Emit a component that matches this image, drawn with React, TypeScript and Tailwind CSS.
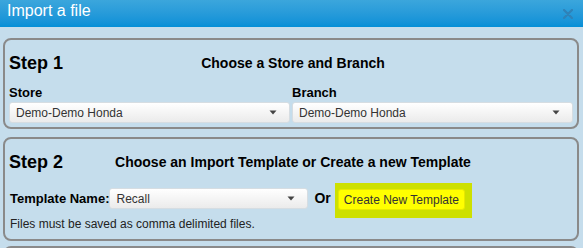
import React from "react";

const Caret = () => (
  <svg width="8" height="5" viewBox="0 0 8 5" className="shrink-0">
    <path d="M0.5 0.5 L7.5 0.5 L4 4.5 Z" fill="#444" />
  </svg>
);

const Select = ({ value, className = "" }: { value: string; className?: string }) => (
  <div
    className={`flex h-[21px] items-center justify-between rounded-[3px] border border-[#d6dde2] bg-gradient-to-b from-[#ffffff] to-[#ebebeb] pl-[6px] pr-[12px] text-[12px] text-[#333] ${className}`}
  >
    <span className="leading-[14px]">{value}</span>
    <Caret />
  </div>
);

const Box = ({ children, className = "" }: { children: React.ReactNode; className?: string }) => (
  <div className={`ml-[3px] mr-[4px] rounded-[8px] border-2 border-[#8a8a8a] px-[4px] ${className}`}>
    {children}
  </div>
);

const StepHeader = ({ step, title }: { step: string; title: string }) => (
  <div className="grid grid-cols-[1fr_auto_1fr] items-start">
    <div className="text-[18px] font-bold leading-[22px] text-black">{step}</div>
    <div className="pl-[4px] text-[14px] font-bold leading-[22px] text-black">{title}</div>
    <div />
  </div>
);

export default function App() {
  return (
    <div
      className="h-[248px] w-[583px] overflow-hidden bg-[#c5ddec]"
      style={{ fontFamily: '"Liberation Sans", Arial, sans-serif' }}
    >
      <div className="flex h-[27px] items-start justify-between bg-gradient-to-b from-[#3ba6dc] to-[#038fd7] pl-[7px] pr-[10px] pt-[1px]">
        <div className="text-[16px] leading-[20px] text-white">Import a file</div>
        <svg width="10" height="10" viewBox="0 0 10 10" className="mt-[8px]">
          <path d="M1 1 L9 9 M9 1 L1 9" stroke="#2f82b8" strokeWidth="2.2" strokeLinecap="round" />
        </svg>
      </div>

      <Box className="mt-[11px] pb-[4px] pt-[12px]">
        <StepHeader step="Step 1" title="Choose a Store and Branch" />
        <div className="mt-[11px] grid grid-cols-2 gap-[2px]">
          <div className="flex flex-col">
            <div className="mb-[1px] text-[13px] font-bold leading-[16px] text-black">Store</div>
            <Select value="Demo-Demo Honda" />
          </div>
          <div className="flex flex-col">
            <div className="mb-[1px] text-[13px] font-bold leading-[16px] text-black">Branch</div>
            <Select value="Demo-Demo Honda" />
          </div>
        </div>
      </Box>

      <Box className="mt-[8px] pb-[8px] pt-[12px]">
        <StepHeader step="Step 2" title="Choose an Import Template or Create a new Template" />
        <div className="mt-[15px] flex h-[21px] items-start">
          <div className="pl-[1px] text-[13px] font-bold leading-[21px] text-black">Template Name:</div>
          <Select value="Recall" className="w-[199px]" />
          <div className="ml-[6px] text-[14px] font-bold leading-[21px] text-black">Or</div>
          <div className="-mt-[5px] ml-[4px] bg-[#cde000] pb-[8px] pl-[3px] pr-[7px] pt-[6px]">
            <div className="flex h-[21px] items-center rounded-[3px] border border-[#e8e800] bg-[#ffff00] px-[5px] text-[12px] leading-[14px] text-[#333]">
              Create New Template
            </div>
          </div>
        </div>
        <div className="mt-[8px] pl-[1px] text-[12px] leading-[14px] text-[#222]">
          Files must be saved as comma delimited files.
        </div>
      </Box>

      <Box className="mt-[5px] h-[40px]">
        <div />
      </Box>
    </div>
  );
}
